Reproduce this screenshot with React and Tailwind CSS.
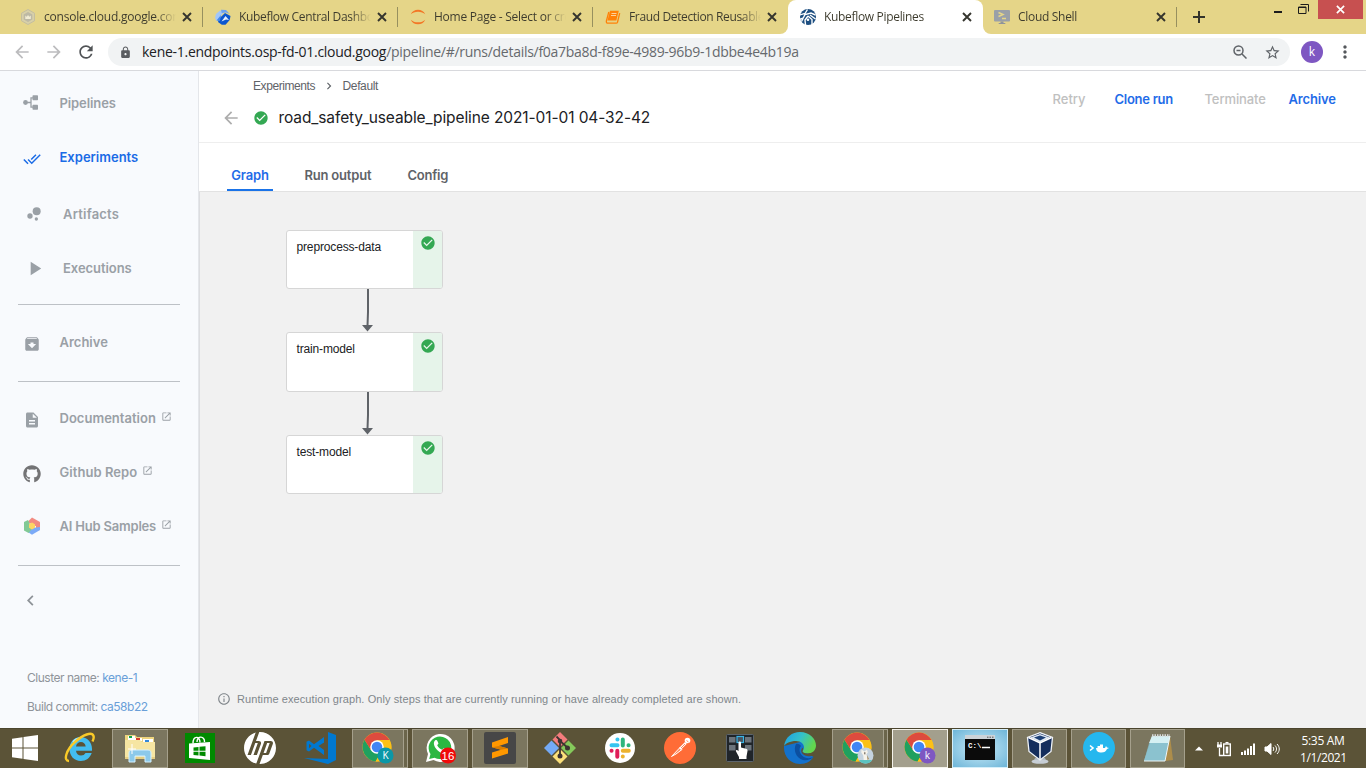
import React from "react";
import {
  MdArchive,
  MdArrowBack,
  MdArrowForward,
  MdBubbleChart,
  MdCheckCircle,
  MdChevronLeft,
  MdChevronRight,
  MdDescription,
  MdDoneAll,
  MdInfoOutline,
  MdLock,
  MdMoreVert,
  MdOpenInNew,
  MdPlayArrow,
  MdRefresh,
  MdStarBorder,
} from "react-icons/md";
import { FaGithub } from "react-icons/fa";
import { SiHp } from "react-icons/si";

const UI = "font-['Open_Sans','Noto_Sans',sans-serif]";
const GOOGLE = "font-['Inter',sans-serif]";
const ARIAL = "font-['Liberation_Sans',Arial,sans-serif]";

/* ---------- favicons ---------- */

function HexIcon() {
  return (
    <svg viewBox="0 0 16 16" className="size-4">
      <path d="M8 .5l6.500 3.700v7.600L8 15.500 1.500 11.800V4.200z" fill="#d8d0a8" stroke="#c4bea0" strokeWidth="1" />
      <path d="M8 3l4.300 2.500v5L8 13l-4.300-2.500v-5z" fill="#bdb9a4" />
      <path d="M5.300 10V6.500l1.500 1.300L8 6l1.300 1.800 1.500-1.300V10z" fill="#f1ecd3" />
    </svg>
  );
}

function KubeflowIcon() {
  return (
    <svg viewBox="0 0 16 16" className="size-4">
      <path d="M1 5l4-3.500 3.500 2L4 9.500 1.500 12 0 9z" fill="#a3c7f7" />
      <path d="M6 .8l5 .2 3.700 4-3.500-1.500-4.500.5z" fill="#6ba2f2" />
      <path d="M4 9.800L10 4l5.500 3-.8 4-4.200 4.800H6.800L3 13z" fill="#0b57d0" />
      <path d="M6.500 12.500L10.500 7l3.500 4-3-.5z" fill="#e6f0ff" />
      <path d="M1.500 11.500L6 6l-1 6z" fill="#3f86ef" />
    </svg>
  );
}

function JupyterIcon() {
  return (
    <svg viewBox="0 0 16 16" className="size-4">
      <path d="M.8 5.300C2 2.300 4.800.7 8 .7s6 1.600 7.200 4.600C13.500 3.700 11 2.700 8 2.700S2.500 3.700.8 5.300z" fill="#f37726" />
      <path d="M.8 10.700c1.200 3 4 4.600 7.200 4.600s6-1.600 7.200-4.600c-1.700 1.600-4.200 2.600-7.200 2.600S2.500 12.300.8 10.700z" fill="#f37726" />
    </svg>
  );
}

function BookIcon() {
  return (
    <svg viewBox="0 0 16 16" className="size-4">
      <path d="M5 1.800h8.800l-2.500 9.700H2.500z" fill="#ff8108" />
      <path d="M3.800 3L1.400 12c-.3 1.300.3 2.200 1.500 2.200h8.200c.7 0 1.200-.4 1.400-1l2.200-9" fill="none" stroke="#ff8108" strokeWidth="1.300" />
      <path d="M6.500 4.500h5M6 6.500h5" stroke="#ffd19a" strokeWidth="1" />
    </svg>
  );
}

function PipelinesFavicon() {
  return (
    <svg viewBox="0 0 16 16" className="size-4">
      <circle cx="8" cy="8" r="8" fill="#1d4e80" />
      <path d="M-.5 6L5 4.500 7.500.5M1.500 12.500l3.500-7 6-1.500 4.500 2M-.5 10.500l4-1.500M5.500 16L5 11l3-4M8 7l4 3.500v5.500M10 6l5.500 4" stroke="#fff" strokeWidth="1.400" fill="none" />
      <circle cx="8" cy="10.800" r="1.300" fill="#fff" />
    </svg>
  );
}

function ShellIcon() {
  return (
    <svg viewBox="0 0 16 16" className="size-4">
      <rect x="0" y="1" width="16" height="11.500" rx="1" fill="#9aa0a8" />
      <path d="M4.500 3.500l4.500 2-4.500 2M8 9.500h4" stroke="#e5d588" strokeWidth="1.500" fill="none" />
      <path d="M6.500 12.500h3v1.500h1.800v1H4.700v-1h1.800z" fill="#8e949c" />
    </svg>
  );
}

const browserTabs = [
  { title: "console.cloud.google.com", icon: <HexIcon />, sep: true, tracking: "tracking-[-0.22px]" },
  { title: "Kubeflow Central Dashboard", icon: <KubeflowIcon />, sep: true, tracking: "tracking-[-0.33px]" },
  { title: "Home Page - Select or create", icon: <JupyterIcon />, sep: true, tracking: "tracking-[-0.25px]" },
  { title: "Fraud Detection Reusable", icon: <BookIcon />, sep: false, tracking: "tracking-[-0.36px]" },
  { title: "Kubeflow Pipelines", icon: <PipelinesFavicon />, active: true, tracking: "tracking-[-0.32px]" },
  { title: "Cloud Shell", icon: <ShellIcon />, sep: true, tracking: "tracking-[-0.3px]", box: "w-[194px] pl-[11px]" },
];

function Cross({ className }) {
  return (
    <svg viewBox="0 0 10 10" className={className}>
      <path d="M1 1l8 8M9 1L1 9" stroke="currentColor" strokeWidth="1.900" fill="none" />
    </svg>
  );
}

function BrowserTab({ tab }) {
  return (
    <div className={`relative flex h-[34px] shrink-0 items-center ${tab.box || "w-[195px] pl-3"} ${tab.active ? "rounded-t-lg bg-white" : ""}`}>
      {tab.active && (
        <>
          <span className="absolute bottom-0 -left-2 size-2 bg-white" />
          <span className="absolute bottom-0 -left-2 size-2 rounded-br-lg bg-[#e5d588]" />
          <span className="absolute -right-2 bottom-0 size-2 bg-white" />
          <span className="absolute -right-2 bottom-0 size-2 rounded-bl-lg bg-[#e5d588]" />
        </>
      )}
      <span className="w-4 shrink-0">{tab.icon}</span>
      <span
        className={`ml-2 w-[132px] shrink-0 overflow-hidden bg-linear-to-r from-[#3c3a2c] from-85% to-transparent to-100% bg-clip-text text-[12px] leading-[18px] whitespace-nowrap text-transparent ${tab.tracking}`}
      >
        {tab.title}
      </span>
      <Cross className="ml-[6px] size-[10px] shrink-0 text-[#35352e]" />
      {tab.sep && <span className="absolute top-[7px] right-0 h-5 w-px bg-[#97905f]" />}
    </div>
  );
}

function TabStrip() {
  return (
    <div className={`flex h-[34px] bg-[#e5d588] pl-2 ${UI}`}>
      {browserTabs.map((tab) => (
        <BrowserTab key={tab.title} tab={tab} />
      ))}
      <svg viewBox="0 0 12 12" className="mt-[11px] ml-4 size-3">
        <path d="M6 0v12M0 6h12" stroke="#33332b" strokeWidth="2" />
      </svg>
      <div className="ml-auto flex">
        <svg viewBox="0 0 10 10" className="mt-[6px] mr-[15px] size-[10px]">
          <path d="M1 6h8" stroke="#1c1c1c" strokeWidth="2" />
        </svg>
        <svg viewBox="0 0 11 11" className="mt-1 mr-[9px] size-[11px]">
          <path d="M.5 3h7.500v6.500H.5zM.5 3.500H8" stroke="#1c1c1c" fill="none" />
          <path d="M2.500.5h8v7" stroke="#1c1c1c" fill="none" />
        </svg>
        <div className="mr-[3px] flex h-[19px] w-[45px] items-center justify-center bg-[#c75050]">
          <Cross className="size-[9px] text-white" />
        </div>
      </div>
    </div>
  );
}

function AddressBar() {
  return (
    <div className={`flex h-[37px] items-center border-b border-[#d8d9dd] bg-white ${UI}`}>
      <MdArrowBack className="ml-3 size-5 text-[#bcbcbe]" />
      <MdArrowForward className="ml-3 size-5 text-[#bcbcbe]" />
      <MdRefresh className="ml-3 size-5 text-[#505356]" />
      <div className="ml-[12px] flex h-7 w-[1182px] items-center rounded-full bg-[#f1f3f4]">
        <MdLock className="ml-[11px] size-[13px] text-[#5a5d61]" />
        <div className="ml-[10px] flex-1 text-[14px] leading-5 tracking-[-0.28px] whitespace-nowrap text-[#66696d]">
          <span className="text-[#202124]">kene-1.endpoints.osp-fd-01.cloud.goog</span>/pipeline/#/runs/details/f0a7ba8d-f89e-4989-96b9-1dbbe4e4b19a
        </div>
        <svg viewBox="0 0 14 14" className="size-[14px]" fill="none" stroke="#5f6368" strokeWidth="1.500">
          <circle cx="5.500" cy="5.500" r="4.500" />
          <path d="M9 9l4.500 4.500M3.500 5.500h4" />
        </svg>
        <MdStarBorder className="mr-[9px] ml-[17px] size-[17px] text-[#5f6368]" />
      </div>
      <div className="ml-[11px] flex size-[22px] items-center justify-center rounded-full bg-[#7e57c2] text-[12px] leading-none text-white">k</div>
      <MdMoreVert className="ml-3 size-5 text-[#55585c]" />
    </div>
  );
}

/* ---------- sidebar ---------- */

function FlowIcon() {
  return (
    <svg viewBox="0 0 16 16" className="size-4">
      <circle cx="2.500" cy="7.500" r="2.400" fill="#9aa0a6" />
      <path d="M2.500 7.500H8M11 2.800H8v9.400h3" fill="none" stroke="#9aa0a6" strokeWidth="1.300" />
      <rect x="9.500" y=".3" width="5.500" height="5" rx=".7" fill="#9aa0a6" />
      <rect x="9.500" y="9.700" width="5.500" height="5" rx=".7" fill="#9aa0a6" />
    </svg>
  );
}

function HubIcon() {
  return (
    <svg viewBox="0 0 18 18" className="size-[18px]">
      <path d="M9 .5l8 4.500-3.500 4.500L4.500 5z" fill="#f28b82" />
      <path d="M13 6l4-1v8l-4 1z" fill="#ee8a82" />
      <path d="M17 10v3l-8 4.700-4.500-3L9 11z" fill="#7baaf7" />
      <path d="M5 3L1 5v8.500l4.500 2.500L9 12 6 5z" fill="#81c995" />
      <path d="M9 5.500L12 7.200v3.600L9 12.500 6 10.800V7.200z" fill="#fdd663" />
    </svg>
  );
}

function NavItem({ icon, label, iconBox = "w-[59.5px] pl-[23px]", color = "text-[#9aa0a6]", tracking = "", external, active }) {
  return (
    <div className={`relative flex h-[54px] items-center ${color}`}>
      {active && <span className="absolute top-2 left-0 h-10 w-[2px] rounded-r bg-[#0d6be8]" />}
      <span className={`shrink-0 ${iconBox}`}>{icon}</span>
      <span className={`text-[13px] leading-5 font-semibold whitespace-nowrap ${tracking}`}>{label}</span>
      {external && <MdOpenInNew className="mb-[3px] ml-[5px] size-[11px]" />}
    </div>
  );
}

function Sidebar() {
  return (
    <aside className={`flex w-[199px] shrink-0 flex-col border-r border-[#e4e6ea] bg-[#f8fafd] pt-[5px] ${GOOGLE}`}>
      <NavItem icon={<FlowIcon />} label="Pipelines" tracking="tracking-[-0.1px]" />
      <NavItem icon={<MdDoneAll className="mt-[3px] size-[18px]" />} label="Experiments" color="text-[#1a6be6]" />
      <div className="mt-[3px]">
        <NavItem iconBox="w-[63px] pl-6" icon={<MdBubbleChart className="size-5" />} label="Artifacts" tracking="tracking-[0.2px]" />
        <NavItem iconBox="w-[63px] pl-[23px]" icon={<MdPlayArrow className="size-[23px]" />} label="Executions" tracking="tracking-[-0.05px]" />
      </div>
      <hr className="mx-[18px] mt-[9px] border-[#bdc1c6]" />
      <div className="mt-[10px] mb-px">
        <NavItem icon={<MdArchive className="mt-[3px] size-[18px]" />} label="Archive" />
      </div>
      <hr className="mx-[18px] mt-[11px] border-[#bdc1c6]" />
      <div className="mt-[9px]">
        <NavItem icon={<MdDescription className="mt-[3px] size-[18px]" />} label="Documentation" tracking="tracking-[0.02px]" external />
        <NavItem icon={<FaGithub className="mt-[3px] size-[18px] text-[#737375]" />} label="Github Repo" tracking="tracking-[0.05px]" external />
        <NavItem icon={<HubIcon />} label="AI Hub Samples" tracking="tracking-[-0.2px]" external />
      </div>
      <hr className="mx-[18px] mt-3 border-[#bdc1c6]" />
      <MdChevronLeft className="mt-6 ml-5 size-[21px] text-[#8d9297]" />
      <div className="mt-[58px] pl-[27px] text-[12px] leading-[18px] tracking-[-0.48px] text-[#8f949a]">
        <div>
          Cluster name: <span className="text-[#6a9fd8]">kene-1</span>
        </div>
        <div className="mt-[11px]">
          Build commit: <span className="text-[#6a9fd8]">ca58b22</span>
        </div>
      </div>
    </aside>
  );
}

/* ---------- run details ---------- */

function RunHeader() {
  return (
    <header className="flex h-[72px] border-b border-[#eeeeee] bg-white">
      <div className="pt-[6px]">
        <div className={`flex h-[18px] items-center pl-[54px] text-[12px] leading-[18px] text-[#5f6368] ${ARIAL}`}>
          <span className="w-[62px] whitespace-nowrap tracking-[-0.42px]">Experiments</span>
          <MdChevronRight className="mr-[6.5px] ml-[7px] size-[14px]" />
          <span className="tracking-[-0.35px]">Default</span>
        </div>
        <div className="mt-[13px] flex h-5 items-center">
          <MdArrowBack className="ml-[21.5px] size-5 text-[#adadad]" />
          <MdCheckCircle className="ml-[12.5px] size-4 text-[#34a853]" />
          <h1 className={`ml-[9.5px] text-[15.5px] leading-5 tracking-[-0.1px] whitespace-nowrap text-[#202124] ${GOOGLE}`}>
            road_safety_useable_pipeline 2021-01-01 04-32-42
          </h1>
        </div>
      </div>
      <div className={`mt-[18px] ml-auto flex h-5 pr-[29.5px] text-[13px] leading-5 whitespace-nowrap ${GOOGLE}`}>
        <span className="w-[62px] font-medium text-[#c0c0c0]">Retry</span>
        <span className="w-[90px] font-semibold tracking-[-0.28px] text-[#1f6ce8]">Clone run</span>
        <span className="w-[84px] font-medium tracking-[-0.1px] text-[#c0c0c0]">Terminate</span>
        <span className="w-[48px] font-semibold tracking-[-0.15px] text-[#1f6ce8]">Archive</span>
      </div>
    </header>
  );
}

function RunTabs() {
  return (
    <div className={`flex h-[49px] items-end border-b border-[#e2e2e2] bg-white pl-7 text-[13px] leading-5 font-semibold text-[#5f6368] ${GOOGLE}`}>
      <div className="flex h-[26px] w-[46px] justify-center border-b-2 border-[#1a73e8] tracking-[-0.2px] text-[#1f6ce8]">Graph</div>
      <div className="ml-[31.5px] h-[26px] w-[68px] whitespace-nowrap tracking-[-0.2px]">Run output</div>
      <div className="ml-[35px] h-[26px] tracking-[-0.25px]">Config</div>
    </div>
  );
}

function GraphNode({ label, height, iconTop = "pt-1" }) {
  return (
    <div className={`flex w-[157px] overflow-hidden rounded-[3px] border border-[#d6d6d6] bg-white ${height}`}>
      <div className={`flex-1 pt-[7px] pl-[9.5px] text-[12px] leading-[18px] tracking-[-0.15px] text-[#202124] ${ARIAL}`}>{label}</div>
      <div className={`flex w-[29px] justify-center bg-[#e6f4ea] ${iconTop}`}>
        <MdCheckCircle className="size-4 text-[#34a853]" />
      </div>
    </div>
  );
}

function Edge() {
  return (
    <svg viewBox="0 0 12 43" className="ml-[75px] block h-[43px] w-3">
      <path d="M7 0v23l-.5 14" stroke="#5f6368" strokeWidth="2" fill="none" />
      <path d="M1 36h11l-5.500 6.500z" fill="#5f6368" />
    </svg>
  );
}

function Graph() {
  return (
    <section className="flex flex-1 flex-col bg-[#f1f1f1]">
      <div className="flex h-[498px] flex-col border-l border-[#dcdde0] pt-[38px] pl-[86px]">
        <GraphNode label="preprocess-data" height="h-[59px]" />
        <Edge />
        <GraphNode label="train-model" height="h-[60px]" iconTop="pt-[5px]" />
        <Edge />
        <GraphNode label="test-model" height="h-[59px]" />
      </div>
      <div className={`flex h-[18px] items-center pl-[18px] text-[#80868b] ${ARIAL}`}>
        <MdInfoOutline className="size-[14px]" />
        <span className="ml-[6px] text-[11px] font-medium tracking-[0.09px] whitespace-nowrap">
          Runtime execution graph. Only steps that are currently running or have already completed are shown.
        </span>
      </div>
    </section>
  );
}

/* ---------- taskbar ---------- */

function WindowsLogo() {
  return (
    <svg viewBox="0 0 26 26" className="size-[26px]" fill="#fff">
      <path d="M0 3.800l10.500-1.500v10.200H0zM11.500 2.100L26 0v12.500H11.500zM0 13.500h10.500v10.200L0 22.200zM11.500 13.500H26V26l-14.500-2.100z" />
    </svg>
  );
}

function InternetExplorer() {
  return (
    <svg viewBox="0 0 32 32" className="size-8">
      <path d="M16.500 5c6.800 0 11.500 5 11.500 12v1.800H12c.3 3 2.200 4.700 5 4.700 2 0 3.500-.8 4.500-2.500h6.200C26 26 22 29 16.800 29 10.300 29 5.500 24 5.500 17S10 5 16.500 5z" fill="#43bdf0" />
      <path d="M12 14.500h9.700c-.4-2.800-2.200-4.500-4.800-4.500-2.600 0-4.400 1.700-4.900 4.500z" fill="#5b5337" />
      <path d="M9 10c2-3 5-4 8-3.800" stroke="#b5eaff" strokeWidth="1.500" fill="none" />
      <path d="M5 29C-1 29 2 18 11 10 19 2.500 28-.5 29.500 4c.5 1.500 0 3.500-1 5.500" fill="none" stroke="#f9ca28" strokeWidth="2.400" />
    </svg>
  );
}

function Explorer() {
  return (
    <svg viewBox="0 0 32 30" className="h-[30px] w-8">
      <path d="M1 2h10l2 2h17v20H1z" fill="#edd47e" />
      <path d="M4 3h7v4H4z" fill="#fff" />
      <path d="M5 3h3v2H5z" fill="#12a54b" />
      <path d="M10 5h8v3h-8z" fill="#fff" />
      <path d="M12 5h4v2h-4z" fill="#d83b2b" />
      <path d="M19 6h10v3H19z" fill="#fff" />
      <path d="M21 7h4v2h-4z" fill="#3588d8" />
      <path d="M1 7h15l2 2h13v17H1z" fill="#f6e5a2" />
      <path d="M1 25h30" stroke="#d5b765" />
      <path d="M5 29v-9c0-2 1-3 3-3h16c2 0 3 1 3 3v9h-6v-6H11v6z" fill="#8cc9ea" stroke="#d4f0ff" />
      <path d="M8 11v10M4 16h8" stroke="#fff" strokeWidth="1" />
    </svg>
  );
}

function Store() {
  return (
    <svg viewBox="0 0 30 30" className="size-[30px]">
      <rect width="30" height="30" fill="#008a00" />
      <path d="M4 10.500l21-1.500V27L4 25z" fill="#fff" />
      <path d="M8 10.500c0-8 7-8 7-1M12 9c0-7 8-6 7.500 0" stroke="#fff" strokeWidth="1.400" fill="none" />
      <path d="M8.500 14.500l5-.5v3.700h-5zM14.500 13.800l6-.6v4.500h-6zM8.500 18.700h5v3.800l-5-.5zM14.500 18.700h6v4.500l-6-.6z" fill="#008a00" />
    </svg>
  );
}

function Hp() {
  return (
    <span className="flex size-8 items-center justify-center rounded-full bg-[#5b5337]">
      <SiHp className="size-8 text-white" />
    </span>
  );
}

function VsCode() {
  return (
    <svg viewBox="0 0 32 32" className="size-8">
      <g fill="#0078d0">
        <path d="M24 0l8 3v25l-8 4L0 26l24 1z" />
        <path fillRule="evenodd" d="M20 5v18L10 15.800 5 19.500l-2.500-1.300V9.800L5 8.500l5 3.800zm0 5.500L14.500 14l5.500 4z" />
      </g>
      <path d="M5 11.800v4.400L7.500 14z" fill="#5b5337" />
    </svg>
  );
}

function ChromeIcon({ children }) {
  return (
    <svg viewBox="0 0 32 32" className="size-8">
      <circle cx="15" cy="15" r="14.500" fill="#fbc116" />
      <path d="M2.500 7.700A14.500 14.500 0 0 0 13.500 29.400L20.500 18 9 18z" fill="#1fa05f" />
      <path d="M15 8h12.500A14.500 14.500 0 0 1 13.500 29.400L21 18z" fill="#fbc116" />
      <path d="M2.500 7.700A14.500 14.500 0 0 1 27.600 8H15L9 18z" fill="#dd4b3e" />
      <circle cx="15" cy="15" r="6.800" fill="#fff" />
      <circle cx="15" cy="15" r="5.300" fill="#4285f4" />
      {children}
    </svg>
  );
}

function ChromeBadge({ fill, letter }) {
  return (
    <ChromeIcon>
      <circle cx="23.500" cy="23.500" r="8" fill={fill} />
      <text x="23.500" y="27" textAnchor="middle" fontSize="10" fill="#fff" className={UI}>
        {letter}
      </text>
    </ChromeIcon>
  );
}

function ChromePhoto() {
  return (
    <ChromeIcon>
      <circle cx="23.500" cy="23.500" r="8" fill="#c5d3df" />
      <path d="M19.500 17.500l3 2 2.500-2 .8 3-1.500 2 3 7h-5.500l-.5-6-2-3z" fill="#f7f3ea" />
      <path d="M22 20.500l1.500 0-.5 2.500z" fill="#3f3428" />
      <path d="M25 23l2 4-1.500 1z" fill="#a58c5d" />
      <path d="M17 28h13c-1 2-3 3.500-6.500 3.500S18 30 17 28z" fill="#5cc3c0" />
    </ChromeIcon>
  );
}

function WhatsApp() {
  return (
    <svg viewBox="0 0 32 32" className="size-8">
      <path d="M2 30l2-8A14 14 0 1 1 9.500 28z" fill="#fff" />
      <path d="M5.200 27l1.300-5A11.300 11.300 0 1 1 10.500 25.700z" fill="#2cb742" />
      <path d="M11 8.500c1-.8 2-.5 2.400.4l1 2.300c.2.700-.9 1.600-1.200 2 1 2 2.700 3.500 5 4.500.5-.4 1.300-1.600 2-1.300l2.500 1.200c.9.500.2 2.600-1 3.300-2 1.200-5.200 0-8-2.500C10.500 15.500 8.500 11 11 8.500z" fill="#fff" />
      <circle cx="24" cy="23.500" r="8" fill="#f00a0a" />
      <text x="24" y="27.500" textAnchor="middle" fontSize="11.500" fill="#fff" className={ARIAL}>
        16
      </text>
    </svg>
  );
}

function Sublime() {
  return (
    <svg viewBox="0 0 32 32" className="size-8">
      <rect width="32" height="32" rx="2" fill="#474747" />
      <path d="M8 10.500L24 5v6l-9 3 9 2.500v5L8 26.500v-6l9-2.700-9-2.500z" fill="#ff9800" />
      <path d="M8 15.300l9 2.500 7-1.300-9-2.500z" fill="#d97d00" />
    </svg>
  );
}

function Git() {
  return (
    <svg viewBox="0 0 32 32" className="size-8">
      <path d="M16 0l7.500 7.500L16 15 8.500 7.500z" fill="#f47c7c" />
      <path d="M24.500 8.500L32 16l-7.500 7.500L17 16z" fill="#85c95b" />
      <path d="M16 17l7.500 7.500L16 32l-7.500-7.500z" fill="#fbe07a" />
      <path d="M7.500 8.500L15 16l-7.500 7.500L0 16z" fill="#74aaf5" />
      <path d="M12.500 4.500L16 8v17M16 9l8 7" stroke="#3d3432" strokeWidth="1.800" fill="none" />
      <circle cx="16" cy="9" r="2.300" fill="#3d3432" />
      <circle cx="16" cy="24" r="2.500" fill="#3d3432" />
      <circle cx="23.500" cy="16" r="2.500" fill="#3d3432" />
    </svg>
  );
}

function Slack() {
  return (
    <svg viewBox="0 0 30 30" className="size-[30px]" strokeLinecap="round" strokeWidth="4" fill="none">
      <circle cx="15" cy="15" r="15" fill="#fff" />
      <path d="M12.400 6.500h.1M6.500 12.300h6" stroke="#36c5f0" />
      <path d="M17.800 6.500v6M23.500 12.300h.1" stroke="#2eb67d" />
      <path d="M17.800 17.700h6M17.800 23.500v.1" stroke="#ecb22e" />
      <path d="M12.300 17.700v6M6.500 17.700h.1" stroke="#e01e5a" />
    </svg>
  );
}

function Postman() {
  return (
    <svg viewBox="0 0 32 32" className="size-8">
      <circle cx="16" cy="16" r="16" fill="#ff6c37" />
      <path d="M7.500 24.500l8.500-9 2 2-6 4.500z" fill="#ff8a5e" stroke="#fff" strokeWidth="1" />
      <path d="M15 16l6-6 1.800 1.800-6 6z" fill="#fff" />
      <circle cx="23.500" cy="8.500" r="2.800" fill="#fff" />
      <path d="M22.500 8.500l2 1.500M17 16l4-4" stroke="#ff6c37" strokeWidth=".8" />
    </svg>
  );
}

function TouchKeys() {
  return (
    <svg viewBox="0 0 28 28" className="size-7">
      <rect x=".5" y=".5" width="27" height="27" rx="1" fill="#20252a" stroke="#5c646c" />
      <g fill="#6c747c">
        <rect x="3" y="3" width="6.500" height="5.500" />
        <rect x="19" y="3" width="6.500" height="5.500" />
        <rect x="3" y="11" width="6.500" height="5.500" />
        <rect x="19" y="11" width="6.500" height="5.500" />
      </g>
      <rect x="11" y="2.500" width="6.500" height="6" fill="#48535e" stroke="#39b4e6" strokeWidth="1.200" />
      <path d="M12.500 8.500c0-1.500 2.500-1.500 2.500 0v5l5 1.200c1.200.4 1.700 1 1.500 2.300l-1 5.500V25h-7.500v-2l-3.200-6c0-1.500 1.500-1.500 2.700.2z" fill="#fff" />
    </svg>
  );
}

function EdgeBrowser() {
  return (
    <svg viewBox="0 0 32 32" className="size-8">
      <defs>
        <linearGradient id="edgeTop" x1="0" y1="0" x2="1" y2=".4">
          <stop offset="0" stopColor="#1c9fe8" />
          <stop offset=".55" stopColor="#35c1c9" />
          <stop offset="1" stopColor="#62d64e" />
        </linearGradient>
      </defs>
      <path d="M0 14v2c0 9 7 16 16 16 6 0 10.500-2.500 13.500-7l-6-4L20 9z" fill="#1371cc" />
      <path d="M0 14C1.500 5 8 0 16 0c9.500 0 16 6.500 16 13.500 0 5-4 8-8.500 8-3.500 0-5-1.300-5-2.200 0-.8 1.500-1.500 1.500-4 0-3.500-3.500-6.300-8-6.300C6 9 1.500 11.500 0 14z" fill="url(#edgeTop)" />
      <path d="M12 12c-3 6 0 14 7 16 4 1 8-.8 10.500-3-3.500 1.700-8.500 1.700-11.500-1.500-2.500-2.500-3.500-7-1-9.500-1.200-1.800-3.500-2.500-5-2z" fill="#0c50a0" />
      <path d="M18.800 15.500c-2 1.500-2 4-.8 5.700 2.500 3 7.500 3.800 11.500 2l.5-3c-2 1.300-4 1.500-6.500 1.300-3.500 0-5-1.300-5-2.200 0-.8 1.200-1.500.3-3.800z" fill="#5b5337" />
    </svg>
  );
}

function Cmd() {
  return (
    <svg viewBox="0 0 30 26" className="h-[26px] w-[30px]">
      <rect width="30" height="25" fill="#0b0b0b" />
      <rect width="30" height="4" fill="#ccd3d8" />
      <path d="M22 2.200h1.500M24.500 2.200H26M27 2.200h1.500" stroke="#555" />
      <text x="3" y="13" fontSize="7.500" fontWeight="bold" fill="#fff" className="font-['Liberation_Mono',monospace]">
        C:\
      </text>
      <path d="M17 12.500h8" stroke="#fff" strokeWidth="1.500" />
    </svg>
  );
}

function VirtualBox() {
  return (
    <svg viewBox="0 0 28 32" className="h-8 w-7">
      <path d="M9 26l-2 4.500h14L19 26z" fill="#a9b2bb" />
      <ellipse cx="14" cy="29.500" rx="8.500" ry="2.300" fill="#c7ced5" />
      <path d="M14 .7l12.500 4.800-1.500 14L14 28 3 19.500l-1.500-14z" fill="#142d5c" stroke="#eff3f8" strokeWidth="1.300" />
      <path d="M4 5.500L14 2l10 3.500L14 10.500z" fill="#dfe8f2" />
      <path d="M8 5.500L14 3.500l6 2L14 8.500z" fill="#1d4076" />
      <path d="M14 10v17M2.500 5.500L14 11l11.500-5.500" stroke="#fff" strokeWidth="1.500" fill="none" />
    </svg>
  );
}

function Docker() {
  return (
    <svg viewBox="0 0 32 32" className="size-8">
      <circle cx="16" cy="16" r="16" fill="#25b7ee" />
      <path d="M7 13.500l3 2.500-3 2.500" stroke="#fff" strokeWidth="1.600" fill="none" />
      <path d="M13 16h1.500v-2H17v-1.500h3V16h2l1-2 1 1.500 2 .5-2 1c-1 2.500-2.700 3.500-5.500 3.500-3.500 0-5-1-5.500-4.500z" fill="#fff" />
    </svg>
  );
}

function Notepad() {
  return (
    <svg viewBox="0 0 30 30" className="size-[30px]">
      <path d="M27 3l3 24-8 1z" fill="#ad8d4b" />
      <path d="M9 3h18l-5 25H1z" fill="#a9d8e0" />
      <path d="M9 3h18l-1.500 7H6z" fill="#d5f0f3" />
      <path d="M6 10h19.500L22 28H1z" fill="#7fb9c8" opacity=".7" />
      <path d="M9 2.500h18" stroke="#d7d9d9" strokeWidth="2.500" strokeDasharray="1.500 1" />
      <path d="M1 28h21l5-25" stroke="#edf5f6" fill="none" />
    </svg>
  );
}

const apps = [
  { name: "ie", icon: <InternetExplorer /> },
  { name: "explorer", icon: <Explorer />, state: "open" },
  { name: "store", icon: <Store /> },
  { name: "hp", icon: <Hp /> },
  { name: "code", icon: <VsCode /> },
  { name: "chrome-a", icon: <ChromeBadge fill="#0b97a7" letter="K" />, state: "stacked" },
  { name: "whatsapp", icon: <WhatsApp />, state: "open" },
  { name: "sublime", icon: <Sublime />, state: "open" },
  { name: "git", icon: <Git /> },
  { name: "slack", icon: <Slack /> },
  { name: "postman", icon: <Postman /> },
  { name: "touch", icon: <TouchKeys /> },
  { name: "edge", icon: <EdgeBrowser /> },
  { name: "chrome-b", icon: <ChromePhoto />, state: "stacked" },
  { name: "chrome-c", icon: <ChromeBadge fill="#7e57c2" letter="k" />, state: "active" },
  { name: "cmd", icon: <Cmd />, state: "alert" },
  { name: "virtualbox", icon: <VirtualBox />, state: "open", width: "w-[55px]" },
  { name: "docker", icon: <Docker />, state: "open", width: "w-[55px]" },
  { name: "notepad", icon: <Notepad />, state: "open", width: "w-[55px]" },
];

const appStates = {
  open: "border border-[#a5a08c] bg-[#7b765f]",
  stacked: "border border-[#a5a08c] bg-[#7b765f]",
  active: "border border-[#f4f2ea] bg-[#a39f8d]",
  alert: "border border-[#d5effa] bg-radial from-[#c9ecf8] to-[#6db5d8]",
};

function TaskButton({ app }) {
  const stacked = app.state === "stacked";
  return (
    <div className={`flex h-[39px] ${app.width || "w-14"}`}>
      <div className={`flex h-full flex-1 items-center justify-center pb-[2px] ${app.state ? appStates[app.state] : ""}`}>{app.icon}</div>
      {stacked && <div className="h-full w-1 border-y border-r border-[#a5a08c] bg-[#6b654b]" />}
    </div>
  );
}

function Tray() {
  return (
    <div className={`flex items-center text-white ${UI}`}>
      <svg viewBox="0 0 8 5" className="h-[5px] w-2">
        <path d="M0 4.500L4 .5l4 4z" fill="#fff" />
      </svg>
      <svg viewBox="0 0 16 16" className="ml-[13px] size-4" fill="none" stroke="#fff">
        <rect x="7.700" y="3" width="6.600" height="11.500" strokeWidth="1.400" />
        <path d="M9.500 1.700h3" strokeWidth="1.500" />
        <path d="M9.700 5.500h2.600v7H9.700z" fill="#fff" stroke="none" />
        <path d="M2 1v3M5 1v3M3.500 7v7.500H7" strokeWidth="1.300" />
        <path d="M1 5h5" strokeWidth="3" />
      </svg>
      <svg viewBox="0 0 16 14" className="ml-2 h-[14px] w-4" fill="#fff">
        <path d="M1 10h2v3H1zM4 8.500h2V13H4zM7 6.500h2V13H7zM10 4h2v9h-2zM13 1.500h2V13h-2z" />
      </svg>
      <svg viewBox="0 0 16 14" className="ml-2 h-[14px] w-4" fill="none" stroke="#fff">
        <path d="M1 5h2l4-3.500v11L3 9H1z" fill="#fff" />
        <path d="M9 5c1 1 1 3 0 4M11 3.500c2 2 2 5 0 7M13 2c3 3 3 7 0 10" />
      </svg>
      <div className="ml-5 w-[46px] text-center text-[12px] leading-[17px] whitespace-nowrap">
        <div className="tracking-[-0.3px]">5:35 AM</div>
        <div className="tracking-[-0.4px]">1/1/2021</div>
      </div>
    </div>
  );
}

function Taskbar() {
  return (
    <footer className="flex h-10 border-t border-[#4b452e] bg-[#5b5337]">
      <div className="flex w-[52px] items-center pb-[2px] pl-3">
        <WindowsLogo />
      </div>
      <div className="flex gap-1">
        {apps.map((app) => (
          <TaskButton key={app.name} app={app} />
        ))}
      </div>
      <div className="ml-[10px] flex">
        <Tray />
      </div>
    </footer>
  );
}

export default function App() {
  return (
    <div className="flex h-[768px] w-[1366px] flex-col overflow-hidden bg-white">
      <TabStrip />
      <AddressBar />
      <main className="flex h-[657px]">
        <Sidebar />
        <div className="flex flex-1 flex-col">
          <RunHeader />
          <RunTabs />
          <Graph />
        </div>
      </main>
      <Taskbar />
    </div>
  );
}
